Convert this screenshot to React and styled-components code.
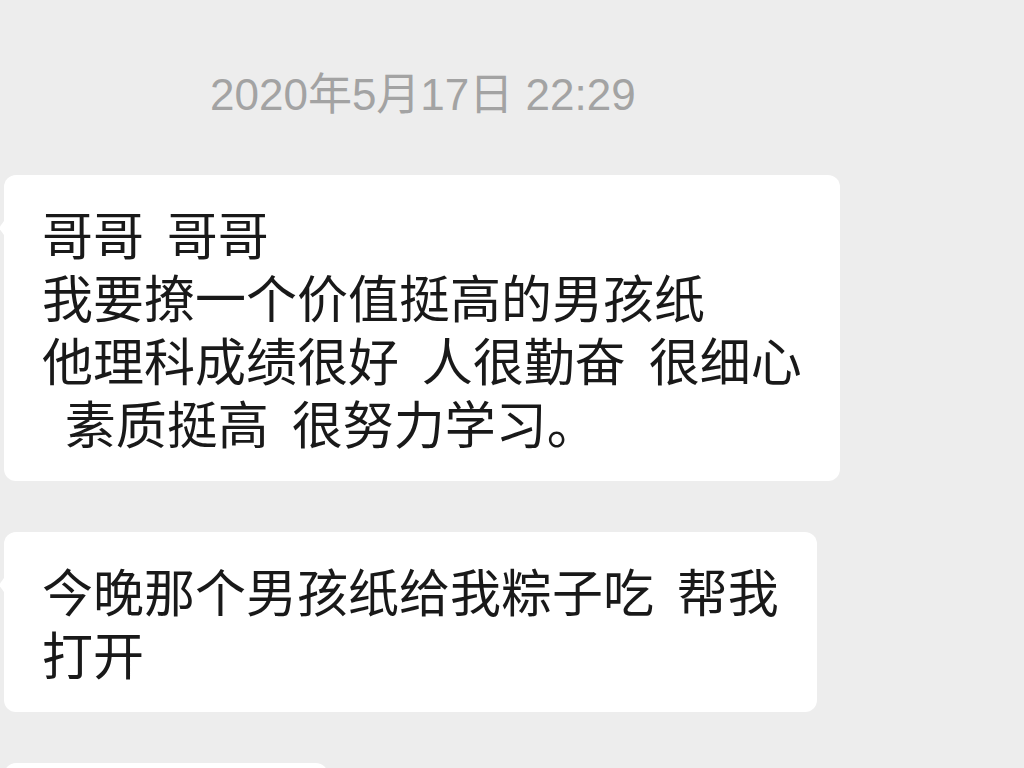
import React from "react"
import styled, { createGlobalStyle } from "styled-components"

const pageColor = "#ededed"
const bubbleColor = "#ffffff"
const textColor = "#191919"
const timeColor = "#a3a3a3"

const GlobalStyle = createGlobalStyle`
    html, body {
        margin: 0;
        padding: 0;
        background: ${pageColor};
        overflow: hidden;
    }
`

const Chat = styled.div`
    width: 1024px;
    height: 768px;
    overflow: hidden;
    background: ${pageColor};
    display: flex;
    flex-direction: column;
    align-items: flex-start;
    gap: 51px;
    padding: 68px 0 0 4px;
    box-sizing: border-box;
    font-family: "Noto Sans CJK SC", "Noto Sans", sans-serif;
`

const TimeStamp = styled.div`
    align-self: stretch;
    padding-left: 206px;
    margin-bottom: 2px;
    font-family: "Liberation Sans", "Noto Sans CJK SC", sans-serif;
    font-size: 44px;
    line-height: 54px;
    color: ${timeColor};
    white-space: pre;
`

const Bubble = styled.div`
    position: relative;
    flex-shrink: 0;
    background: ${bubbleColor};
    border-radius: 12px;
    padding: 27px 38px;
    width: ${(p) => p.$width || "auto"};
    min-height: ${(p) => (p.$width ? "63px" : "0")};
    box-sizing: border-box;

    &::before {
        content: "";
        position: absolute;
        left: -5px;
        top: 46px;
        border-top: 7px solid transparent;
        border-bottom: 7px solid transparent;
        border-right: 5px solid ${bubbleColor};
    }
`

const Line = styled.div`
    font-size: 51px;
    line-height: 63px;
    height: 63px;
    color: ${textColor};
    white-space: pre;
`

const messages = [
    [
        "哥哥  哥哥",
        "我要撩一个价值挺高的男孩纸",
        "他理科成绩很好  人很勤奋  很细心",
        "  素质挺高  很努力学习。",
    ],
    ["今晚那个男孩纸给我粽子吃  帮我", "打开"],
]

export default function App() {
    return (
        <>
            <GlobalStyle />
            <Chat>
                <TimeStamp>2020年5月17日 22:29</TimeStamp>
                {messages.map((lines, i) => (
                    <Bubble key={i}>
                        {lines.map((l, j) => (
                            <Line key={j}>{l}</Line>
                        ))}
                    </Bubble>
                ))}
                <Bubble $width="324px" aria-hidden="true" />
            </Chat>
        </>
    )
}
